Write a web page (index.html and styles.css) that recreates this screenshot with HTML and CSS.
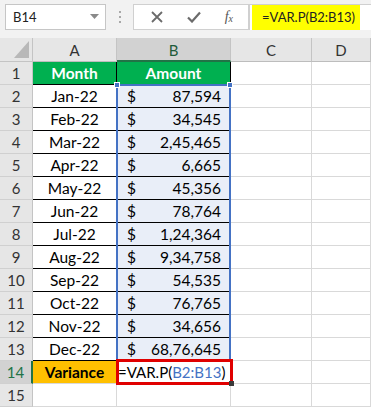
FILE: index.html
```html
<!DOCTYPE html>
<html lang="en">
<head>
  <meta charset="UTF-8" />
  <title>VAR.P</title>
  <link rel="stylesheet" href="styles.css">
</head>
<body>
  <div class="formula-bar">
    <div class="name-box">
      <span>B14</span>
      <svg class="caret" width="9" height="5" viewBox="0 0 9 5"><path d="M0 0h9L4.5 5z" fill="#8a8a8a"/></svg>
    </div>
    <div class="grip"><i></i><i></i><i></i></div>
    <div class="fx-buttons">
      <svg width="12" height="12" viewBox="0 0 12 12"><path d="M1 1L11 11M11 1L1 11" stroke="#6b6b6b" stroke-width="1.8"/></svg>
      <svg width="14" height="12" viewBox="0 0 14 12"><path d="M1 6.5L5 10.5L13 1.5" stroke="#6b6b6b" stroke-width="2.2" fill="none"/></svg>
      <span class="fx">f<sub>x</sub></span>
    </div>
    <div class="formula-input">
      <span class="highlight">=VAR.P(B2:B13)</span>
    </div>
  </div>

  <div class="sheet">
    <div class="corner"></div>
    <div class="col-head">A</div>
    <div class="col-head selected">B</div>
    <div class="col-head">C</div>
    <div class="col-head">D</div>

    <div class="row-head">1</div>
    <div class="cell boxed head-green">Month</div>
    <div class="cell boxed head-green">Amount</div>
    <div class="cell"></div>
    <div class="cell"></div>

    <div class="row-head">2</div>
    <div class="cell boxed month">Jan-22</div>
    <div class="cell boxed amount"><span>$</span><span>87,594</span></div>
    <div class="cell"></div><div class="cell"></div>

    <div class="row-head">3</div>
    <div class="cell boxed month">Feb-22</div>
    <div class="cell boxed amount"><span>$</span><span>34,545</span></div>
    <div class="cell"></div><div class="cell"></div>

    <div class="row-head">4</div>
    <div class="cell boxed month">Mar-22</div>
    <div class="cell boxed amount"><span>$</span><span>2,45,465</span></div>
    <div class="cell"></div><div class="cell"></div>

    <div class="row-head">5</div>
    <div class="cell boxed month">Apr-22</div>
    <div class="cell boxed amount"><span>$</span><span>6,665</span></div>
    <div class="cell"></div><div class="cell"></div>

    <div class="row-head">6</div>
    <div class="cell boxed month">May-22</div>
    <div class="cell boxed amount"><span>$</span><span>45,356</span></div>
    <div class="cell"></div><div class="cell"></div>

    <div class="row-head">7</div>
    <div class="cell boxed month">Jun-22</div>
    <div class="cell boxed amount"><span>$</span><span>78,764</span></div>
    <div class="cell"></div><div class="cell"></div>

    <div class="row-head">8</div>
    <div class="cell boxed month">Jul-22</div>
    <div class="cell boxed amount"><span>$</span><span>1,24,364</span></div>
    <div class="cell"></div><div class="cell"></div>

    <div class="row-head">9</div>
    <div class="cell boxed month">Aug-22</div>
    <div class="cell boxed amount"><span>$</span><span>9,34,758</span></div>
    <div class="cell"></div><div class="cell"></div>

    <div class="row-head">10</div>
    <div class="cell boxed month">Sep-22</div>
    <div class="cell boxed amount"><span>$</span><span>54,535</span></div>
    <div class="cell"></div><div class="cell"></div>

    <div class="row-head">11</div>
    <div class="cell boxed month">Oct-22</div>
    <div class="cell boxed amount"><span>$</span><span>76,765</span></div>
    <div class="cell"></div><div class="cell"></div>

    <div class="row-head">12</div>
    <div class="cell boxed month">Nov-22</div>
    <div class="cell boxed amount"><span>$</span><span>34,656</span></div>
    <div class="cell"></div><div class="cell"></div>

    <div class="row-head">13</div>
    <div class="cell boxed month">Dec-22</div>
    <div class="cell boxed amount"><span>$</span><span>68,76,645</span></div>
    <div class="cell"></div><div class="cell"></div>

    <div class="row-head selected">14</div>
    <div class="cell variance">Variance</div>
    <div class="cell formula">=VAR.P(<span class="ref">B2:B13</span>)</div>
    <div class="cell"></div><div class="cell"></div>

    <div class="row-head">15</div>
    <div class="cell"></div><div class="cell"></div><div class="cell"></div><div class="cell"></div>

    <!-- overlays -->
    <div class="range-box">
      <i class="handle tl"></i><i class="handle tr"></i>
    </div>
    <div class="edit-box"><i class="fill-handle"></i></div>
  </div>
</body>
</html>
```

FILE: styles.css
```css
* {
  box-sizing: border-box;
}

body {
  margin: 0;
  background: #fff;
  font-family: 'Lato', 'Liberation Sans', sans-serif;
  color: #000;
}

.formula-bar {
  height: 38px;
  background: #f2f2f2;
  display: flex;
  align-items: flex-start;
  padding-top: 4px;
}

.name-box {
  margin-left: 5px;
  width: 101px;
  height: 26px;
  background: #fff;
  border: 1px solid #c6c6c6;
  display: flex;
  align-items: center;
  justify-content: space-between;
  padding: 0 6px 0 7px;
  font-size: 13px;
  color: #222;
}

.caret {
  margin-bottom: 2px;
}

.grip {
  width: 27px;
  height: 26px;
  display: flex;
  flex-direction: column;
  align-items: center;
  justify-content: center;
  gap: 3px;
}

.grip i {
  width: 2px;
  height: 2px;
  background: #a8a8a8;
}

.fx-buttons {
  width: 116px;
  height: 26px;
  background: #fff;
  border: 1px solid #d0d0d0;
  display: flex;
  align-items: center;
  justify-content: space-between;
  padding: 0 15px 0 17px;
}

.fx {
  font-family: 'Liberation Serif', serif;
  font-style: italic;
  font-size: 14px;
  color: #555;
}

.fx sub {
  font-size: 10px;
  vertical-align: -1px;
}

.formula-input {
  flex: 1;
  height: 26px;
  background: #fff;
  border-top: 1px solid #d0d0d0;
  border-left: 1px solid #d0d0d0;
  padding-left: 2px;
  display: flex;
}

.highlight {
  background: #ffff00;
  height: 25px;
  line-height: 25px;
  padding: 0 5px 0 10px;
  font-size: 13px;
  color: #222;
}

.sheet {
  position: relative;
  display: grid;
  grid-template-columns: 33px 84px 114px 81px 59px;
  grid-template-rows: 24px repeat(15, 23px);
}

.corner {
  background: #e6e6e6;
  border-right: 1px solid #c4c4c4;
  border-bottom: 1px solid #c4c4c4;
  position: relative;
}

.corner::after {
  content: "";
  position: absolute;
  right: 3px;
  bottom: 3px;
  border-left: 15px solid transparent;
  border-bottom: 17px solid #b8b8b8;
}

.col-head {
  background: #e6e6e6;
  border-right: 1px solid #c4c4c4;
  border-bottom: 1px solid #bdbdbd;
  display: flex;
  align-items: center;
  justify-content: center;
  font-size: 15px;
  color: #333;
  padding-top: 1px;
}

.col-head.selected {
  background: #d2d2d2;
  color: #1e5b3a;
  border-bottom: 2px solid #217346;
}

.row-head {
  background: #e6e6e6;
  border-right: 1px solid #c4c4c4;
  border-bottom: 1px solid #d0d0d0;
  display: flex;
  align-items: center;
  justify-content: center;
  font-size: 15px;
  color: #333;
}

.row-head.selected {
  background: #d2d2d2;
  color: #217346;
  border-right: 2px solid #217346;
}

.cell {
  border-right: 1px solid #d9d9d9;
  border-bottom: 1px solid #d9d9d9;
  font-size: 15.5px;
  display: flex;
  align-items: center;
  white-space: nowrap;
}

.cell.boxed {
  border-right-color: #000;
  border-bottom-color: #000;
}

.head-green {
  background: #00b050;
  color: #fff;
  font-weight: bold;
  justify-content: center;
}

.month {
  justify-content: center;
}

.amount {
  background: #e9eef8;
  justify-content: space-between;
  padding: 0 9px 0 10px;
}

.variance {
  background: #ffc000;
  font-weight: bold;
  justify-content: center;
}

.formula {
  padding-left: 1px;
  font-size: 15px;
  position: relative;
  z-index: 2;
}

.ref {
  color: #4472c4;
}

.range-box {
  position: absolute;
  grid-row: 3 / 15;
  grid-column: 3 / 4;
  top: -1px;
  left: -1px;
  right: 0;
  bottom: 0;
  border: 2px solid #4472c4;
  z-index: 3;
}

.handle {
  position: absolute;
  width: 6px;
  height: 6px;
  background: #4472c4;
  border: 1px solid #fff;
  top: -4px;
}

.handle.tl { left: -4px; }
.handle.tr { right: -4px; }

.edit-box {
  position: absolute;
  grid-row: 15 / 16;
  grid-column: 3 / 4;
  top: -2px;
  left: -1px;
  right: -2px;
  bottom: -1px;
  border: 3px solid #e00000;
  z-index: 4;
}

.fill-handle {
  position: absolute;
  right: -4px;
  bottom: -4px;
  width: 5px;
  height: 5px;
  background: #3a3a3a;
}
```
